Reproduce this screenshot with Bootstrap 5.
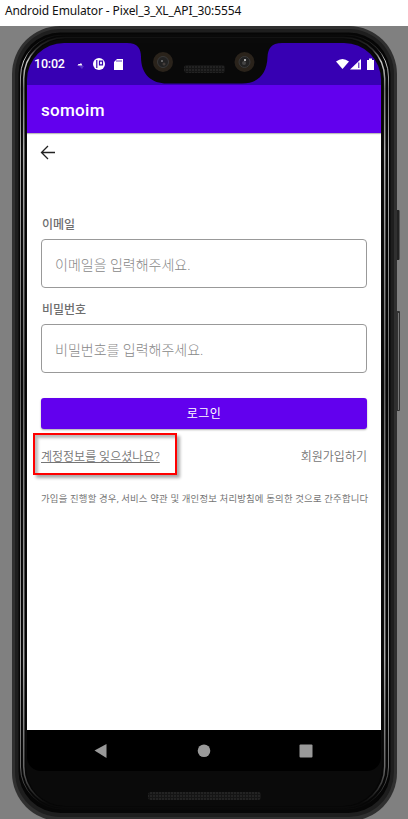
<!DOCTYPE html>
<html lang="ko">
<head>
<meta charset="utf-8">
<meta name="viewport" content="width=device-width, initial-scale=1">
<title>Android Emulator</title>
<link href="https://cdn.jsdelivr.net/npm/bootstrap@5.3.0/dist/css/bootstrap.min.css" rel="stylesheet">
<style>
body{font-family:Roboto,"Noto Sans CJK KR",sans-serif;background:#808080;width:408px;height:819px;overflow:hidden}
.window-title{height:26px;font:12px/22px "Noto Sans",sans-serif;padding-left:5px;color:#111;letter-spacing:-.12px;white-space:nowrap}
.stage{height:793px}
.frame-art{left:0;top:0;z-index:0}
.screen{margin:17px 27px 0;width:354px;height:728px;z-index:1;border-radius:37px 37px 14px 14px;overflow:hidden}
.statusbar{height:42px;background:#3700b3;font-size:12.5px;font-weight:500;padding-left:7px;padding-right:6px}
.clock{letter-spacing:-.2px;width:32px}
.appbar{height:48px;background:#6200ee;font-size:17px;font-weight:500;padding:3px 0 0 14px;letter-spacing:.3px;box-shadow:0 1px 1px #0004;z-index:1}
.notch{left:0;top:0;z-index:2}
.back{height:39px;padding:11px 0 0 13px}
.login{padding:38px 14px 0}
.login label{font-size:12px;line-height:18px;height:29px;padding:6px 0 0 1px;color:#6e6e6e;font-weight:500}
.login .form-control{height:49px;border:1px solid #999;border-radius:4px;font-size:14px;font-weight:300;padding:2px 13px 0;color:#888}
.login .form-control::placeholder{color:#888}
.login .second{margin-top:7px}
.login .btn{height:31px;margin-top:25px;background:#6200ee;color:#fff;border:0;border-radius:3px;font-size:12px;letter-spacing:.5px;padding:0;box-shadow:0 1px 2px #0005}
.links{margin-top:4px;height:42px;font-size:12px;font-weight:350;color:#757575}
.marked{margin-left:-8px;width:144px;height:42px;border:2px solid #f00;padding:6px 0 0 6px;box-shadow:3px 3px 3px #0005,inset 3px 3px 3px #0004}
.marked a,.links>a{color:#757575}
.signup{padding-top:6px}
.terms{font-size:9.4px;line-height:14px;margin-top:17px;color:#757575;white-space:nowrap;letter-spacing:.2px}
.navkeys{height:41px;background:#000;padding:0 68px 0 67px}
</style>
<script src="https://cdn.jsdelivr.net/npm/bootstrap@5.3.0/dist/js/bootstrap.bundle.min.js"></script>
</head>
<body>
<header class="window-title bg-white">Android Emulator - Pixel_3_XL_API_30:5554</header>
<main class="stage position-relative d-flex align-items-start">
<svg class="frame-art position-absolute" width="408" height="793" viewBox="0 26 408 793">
 <defs>
  <pattern id="mesh" width="3" height="3" patternUnits="userSpaceOnUse"><rect width="3" height="3" fill="#151515"/><circle cx="1" cy="1" r=".8" fill="#333"/></pattern>
  <linearGradient id="shine" gradientUnits="userSpaceOnUse" x1="0" x2="0" y1="34" y2="815"><stop offset="0" stop-color="#0a0a0a"/><stop offset=".02" stop-color="#333"/><stop offset=".035" stop-color="#ccc"/><stop offset=".07" stop-color="#777"/><stop offset=".15" stop-color="#b0b0b0"/><stop offset=".45" stop-color="#666"/><stop offset=".8" stop-color="#aaa"/><stop offset=".94" stop-color="#666"/><stop offset=".985" stop-color="#0a0a0a"/></linearGradient>
 </defs>
 <rect x="395" y="210" width="4.500" height="50" rx="1" fill="#222"/>
 <rect x="395" y="311" width="5" height="100" rx="1" fill="#333"/><path d="M398.500 313v97" stroke="#777"/>
 <rect x="12" y="26" width="385" height="795" rx="48" fill="#303030"/>
 <rect x="15" y="29" width="379" height="788" rx="45" fill="#1e1e1e"/>
 <rect x="18.500" y="32.500" width="372" height="780.500" rx="42" fill="#060606"/>
 <rect x="20.500" y="35" width="368" height="774" rx="42" fill="none" stroke="url(#shine)"/>
 <rect x="23.700" y="37.500" width="361" height="770" rx="41" fill="none" stroke="url(#shine)" stroke-width="1.500"/>
 <rect x="26" y="39" width="356" height="767" rx="39" fill="#0a0a0a"/>
 <rect x="148" y="792" width="113" height="8" rx="3" fill="url(#mesh)"/>
</svg>
<section class="screen position-relative d-flex flex-column">
 <div class="statusbar d-flex align-items-center text-white flex-shrink-0">
  <span class="clock">10:02</span>
  <svg width="60" height="18" viewBox="70 55 60 18" class="ms-1"><path d="M79 66l3 3 2-3z" fill="#5a30c8"/><path d="M77.500 65.500l1-1.500h1.500l1-1 1.500 2.500z" fill="#fff"/><circle cx="99" cy="64" r="6" fill="#fff"/><path d="M96.800 60v8M99.500 61.200h3v3.600h-3z" fill="none" stroke="#3700b3" stroke-width="1.200"/><path d="M117 59h6v11h-9v-8z" fill="#fff"/><path d="M117 60v2m2-2v2m2-2v2" stroke="#3700b3" stroke-width=".8"/></svg>
  <svg width="40" height="14" viewBox="335 57 40 14" class="ms-auto"><path d="M336 61.500q6.500-5 13 0L342.500 69z" fill="#fff"/><path d="M350 69.500L361 59v10.500z" fill="#fff"/><path d="M358.800 62.500v5.500" stroke="#3700b3"/><path d="M367 60h2v-1.500h3V60h2v10h-7z" fill="#fff"/></svg>
 </div>
 <svg class="notch position-absolute" width="354" height="42" viewBox="27 43 354 42"><path d="M127 43C138 43 141 49 141 57C141 75 152 83.500 167 83.500H242C258 83.500 267 74 267.500 57C268 49 271 43 282 43z" fill="#090909"/><g fill="#2a231b"><circle cx="163" cy="62" r="10"/><circle cx="244.500" cy="62" r="10"/></g><g fill="#222" stroke="#3a3a3a"><circle cx="163" cy="62" r="5.500"/><circle cx="244.500" cy="62" r="5.500"/></g><circle cx="162" cy="61" r="1" fill="#777"/><circle cx="164" cy="64" r="1.500" fill="#443d3a"/><circle cx="245" cy="60" r="1" fill="#ddd"/><circle cx="244" cy="63" r="2" fill="#444"/><rect x="184" y="65" width="41" height="8" rx="3" fill="url(#mesh)"/></svg>
 <nav class="appbar position-relative d-flex align-items-center text-white flex-shrink-0">somoim</nav>
 <div class="back bg-white flex-shrink-0"><svg class="d-block" width="16" height="16" viewBox="0 0 16 16" fill="none" stroke="#222" stroke-width="1.300"><path d="M15 8.500H2M8 2L1.500 8.500 8 15"/></svg></div>
 <form class="login bg-white flex-grow-1">
  <label class="d-block" for="email">이메일</label>
  <input class="form-control" id="email" placeholder="이메일을 입력해주세요.">
  <label class="d-block second" for="pw">비밀번호</label>
  <input class="form-control" id="pw" placeholder="비밀번호를 입력해주세요.">
  <button class="btn w-100 d-flex align-items-center justify-content-center" type="button">로그인</button>
  <div class="links d-flex align-items-center justify-content-between"><div class="marked d-flex align-items-center"><a href="#">계정정보를 잊으셨나요?</a></div><a href="#" class="signup text-decoration-none">회원가입하기</a></div>
  <p class="terms mb-0">가입을 진행할 경우, 서비스 약관 및 개인정보 처리방침에 동의한 것으로 간주합니다</p>
 </form>
 <div class="navkeys d-flex align-items-center justify-content-between flex-shrink-0"><svg width="14" height="14"><path d="M.5 6.500L12.500 0v14z" fill="#999"/></svg><svg width="14" height="14"><circle cx="7" cy="6.800" r="6.300" fill="#999"/></svg><svg width="14" height="14"><rect x=".5" y=".5" width="13" height="13" rx="1" fill="#999"/></svg></div>
</section>
</main>
</body>
</html>
